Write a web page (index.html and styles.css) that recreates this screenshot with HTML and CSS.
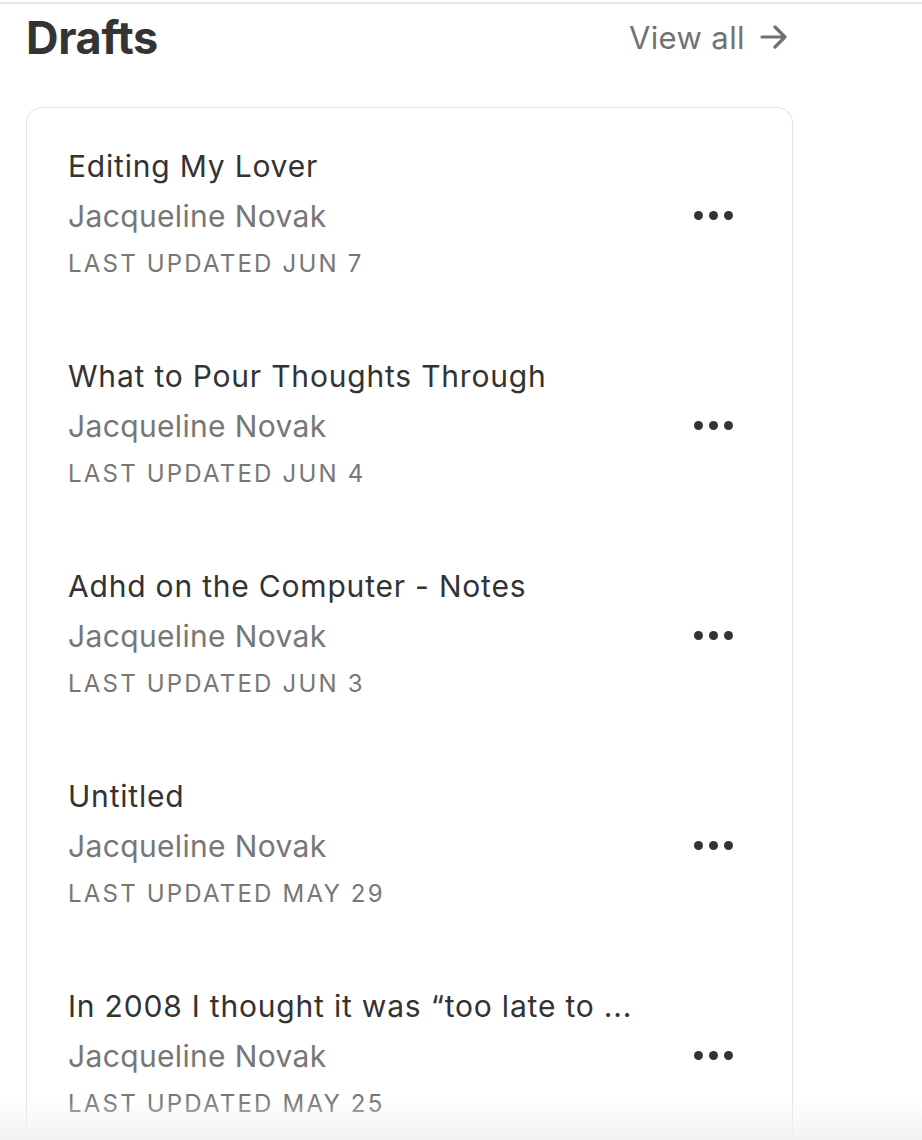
FILE: index.html
```html
<!DOCTYPE html>
<html>
<head>
<meta charset="utf-8">
<link rel="stylesheet" href="styles.css">
</head>
<body>
<div class="topline"></div>
<main class="drafts">
  <header class="drafts-head">
    <h1 class="drafts-title">Drafts</h1>
    <a class="view-all" href="#">View all
      <svg class="arrow" width="30" height="26" viewBox="0 0 30 26" fill="none" stroke="#707070" stroke-width="3.2" stroke-linecap="round" stroke-linejoin="round"><path d="M3 13H26M16 3L26 13L16 23"/></svg>
    </a>
  </header>
  <section class="card">
    <div class="item">
      <div class="meta">
        <div class="title">Editing My Lover</div>
        <div class="author">Jacqueline Novak</div>
        <div class="date">LAST UPDATED JUN 7</div>
      </div>
      <div class="more"><span></span><span></span><span></span></div>
    </div>
    <div class="item">
      <div class="meta">
        <div class="title">What to Pour Thoughts Through</div>
        <div class="author">Jacqueline Novak</div>
        <div class="date">LAST UPDATED JUN 4</div>
      </div>
      <div class="more"><span></span><span></span><span></span></div>
    </div>
    <div class="item">
      <div class="meta">
        <div class="title">Adhd on the Computer - Notes</div>
        <div class="author">Jacqueline Novak</div>
        <div class="date">LAST UPDATED JUN 3</div>
      </div>
      <div class="more"><span></span><span></span><span></span></div>
    </div>
    <div class="item">
      <div class="meta">
        <div class="title">Untitled</div>
        <div class="author">Jacqueline Novak</div>
        <div class="date">LAST UPDATED MAY 29</div>
      </div>
      <div class="more"><span></span><span></span><span></span></div>
    </div>
    <div class="item">
      <div class="meta">
        <div class="title">In 2008 I thought it was “too late to ...</div>
        <div class="author">Jacqueline Novak</div>
        <div class="date">LAST UPDATED MAY 25</div>
      </div>
      <div class="more"><span></span><span></span><span></span></div>
    </div>
  </section>
</main>
<div class="fade"></div>
</body>
</html>
```
FILE: styles.css
```css
html, body {
  margin: 0;
  padding: 0;
  background: #fff;
  font-family: Inter, "Liberation Sans", sans-serif;
}
body {
  height: 1140px;
  overflow: hidden;
}
.topline {
  margin-top: 2px;
  height: 2px;
  background: #e6e6e6;
}
.drafts {
  margin-left: 26px;
  width: 767px;
}
.drafts-head {
  display: flex;
  justify-content: space-between;
  align-items: center;
  height: 66px;
  margin-bottom: 37px;
}
.drafts-title {
  margin: 0;
  font-size: 45px;
  font-weight: 700;
  color: #333535;
  letter-spacing: -0.3px;
}
.view-all {
  display: flex;
  align-items: center;
  gap: 14px;
  margin-right: 4px;
  font-size: 31px;
  letter-spacing: 0.4px;
  color: #727272;
  text-decoration: none;
}
.card {
  border: 1.5px solid #e4e4e4;
  border-bottom: none;
  border-radius: 16px 16px 0 0;
  padding: 33px 59px 0 41px;
  height: 1100px;
}
.item {
  display: flex;
  align-items: center;
  justify-content: space-between;
  margin-bottom: 64px;
}
.title {
  font-size: 30px;
  line-height: 50px;
  color: #333;
  letter-spacing: 0.8px;
  white-space: nowrap;
}
.author {
  font-size: 30px;
  line-height: 50px;
  color: #777;
  letter-spacing: 0.35px;
}
.date {
  font-size: 24px;
  line-height: 46px;
  color: #777;
  letter-spacing: 2.2px;
}
.more {
  display: flex;
  gap: 6px;
  margin-top: 2px;
}
.more span {
  width: 9px;
  height: 9px;
  border-radius: 50%;
  background: #333;
}
.fade {
  position: fixed;
  left: 0;
  right: 0;
  bottom: 0;
  height: 40px;
  background: linear-gradient(to bottom, rgba(245,245,245,0), rgba(242,242,242,1));
  pointer-events: none;
}
```
